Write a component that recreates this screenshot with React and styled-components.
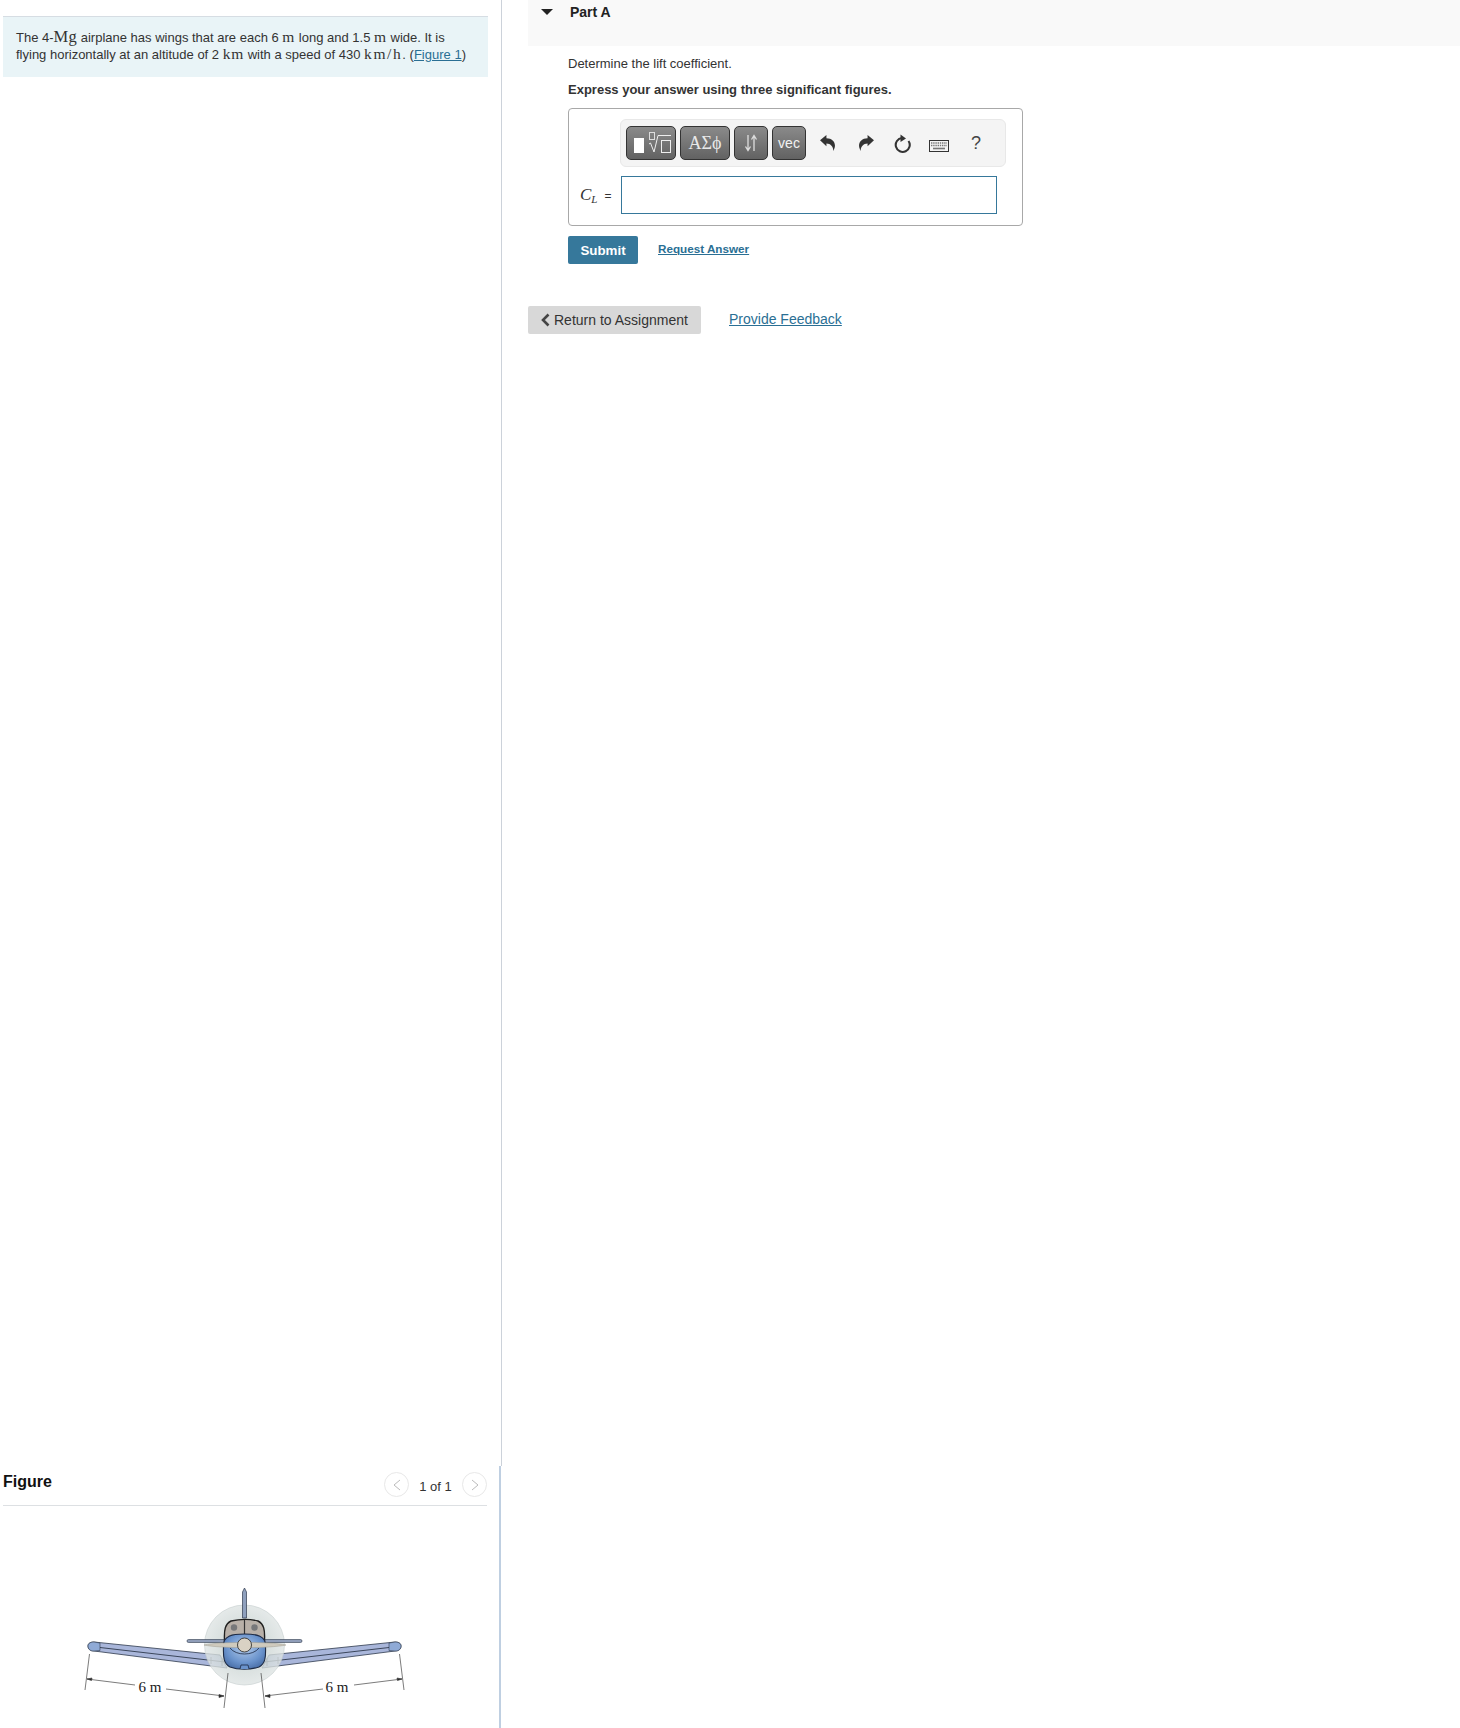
import React from 'react'
import styled, { createGlobalStyle } from 'styled-components'

const Global = createGlobalStyle`
    html, body {
        margin: 0;
        padding: 0;
        background: #fff;
    }
    body {
        font-family: "Liberation Sans", Arial, sans-serif;
        color: #333;
    }
`

const Page = styled.div`
    display: flex;
    width: 1460px;
    height: 1728px;
    overflow: hidden;
`

const LeftColumn = styled.div`
    display: flex;
    flex-direction: column;
    width: 502px;
    flex-shrink: 0;
`

const ProblemPane = styled.div`
    height: 1466px;
    box-sizing: border-box;
    padding: 16px 0 0 3px;
    border-right: 1px solid #ccd2da;
`

const ProblemBox = styled.div`
    width: 485px;
    height: 61px;
    box-sizing: border-box;
    padding: 12px 13px 0;
    background: #e9f4f7;
    border-top: 1px solid #d6dde3;
    font-size: 13px;
    line-height: 17px;
    white-space: nowrap;
`

const MathText = styled.span`
    font-family: "Liberation Serif", "Times New Roman", serif;
    font-size: ${p => p.$size || 15.5}px;
    line-height: 0;
    letter-spacing: ${p => p.$spacing || 0.8}px;
`

const TextLink = styled.a`
    color: #2a6f94;
    text-decoration: underline;
`

const FigurePane = styled.div`
    flex: 1;
    width: 501px;
    box-sizing: border-box;
    padding-left: 3px;
    border-right: 2px solid #bfcfe1;
`

const FigureHeader = styled.div`
    display: flex;
    align-items: center;
    justify-content: space-between;
    width: 484px;
    height: 39px;
    border-bottom: 1px solid #dde0e3;
`

const FigureTitle = styled.h3`
    margin: 0 0 8px;
    font-size: 16px;
    font-weight: 700;
    color: #111;
`

const Pager = styled.div`
    display: flex;
    align-items: center;
    margin-top: 2px;
    font-size: 13px;
    color: #333;
`

const PagerButton = styled.span`
    display: flex;
    align-items: center;
    justify-content: center;
    width: 25px;
    height: 25px;
    box-sizing: border-box;
    border: 1px solid #e8e8e8;
    border-radius: 50%;
    margin-top: -4px;
`

const PagerLabel = styled.span`
    width: 53px;
    text-align: center;
`

const FigureArt = styled.svg`
    display: block;
    margin: 64px 0 0 67px;
`

const RightColumn = styled.div`
    flex: 1;
    padding-left: 26px;
`

const PartHeader = styled.div`
    display: flex;
    align-items: flex-start;
    height: 46px;
    background: #f9f9f9;
`

const Caret = styled.span`
    width: 0;
    height: 0;
    margin: 9px 0 0 13px;
    border-left: 6px solid transparent;
    border-right: 6px solid transparent;
    border-top: 6px solid #222;
`

const PartTitle = styled.h2`
    margin: 4px 0 0 17px;
    font-size: 14px;
    line-height: 16px;
    font-weight: 700;
    color: #222;
`

const PartBody = styled.div`
    padding-left: 40px;
`

const Prompt = styled.p`
    margin: 10px 0 0;
    font-size: 13px;
    line-height: 16px;
`

const Hint = styled.p`
    margin: 10px 0 0;
    font-size: 13px;
    line-height: 16px;
    font-weight: 700;
    color: #333;
`

const AnswerBox = styled.div`
    width: 455px;
    height: 118px;
    box-sizing: border-box;
    margin-top: 10px;
    padding: 10px 16px 0 51px;
    border: 1px solid #a8a8a8;
    border-radius: 4px;
`

const Toolbar = styled.div`
    display: flex;
    align-items: center;
    width: 386px;
    height: 48px;
    box-sizing: border-box;
    padding-left: 5px;
    background: #f4f4f4;
    border: 1px solid #e8e8e8;
    border-radius: 6px;
`

const ToolButton = styled.span`
    display: flex;
    align-items: center;
    justify-content: center;
    width: ${p => p.$w}px;
    height: 34px;
    box-sizing: border-box;
    margin-right: 4px;
    background: linear-gradient(#8a8a8a, #626262);
    border: 1px solid #333;
    border-radius: 5px;
    color: #f2f2f2;
    font-size: 14px;
`

const GreekLabel = styled.span`
    font-family: "Liberation Serif", serif;
    font-size: 18px;
    color: #e8e8e8;
`

const IconSlot = styled.span`
    display: flex;
    align-items: center;
    justify-content: center;
    width: ${p => p.$w}px;
    height: 34px;
    color: #444;
    font-size: 18px;
`

const AnswerRow = styled.div`
    display: flex;
    align-items: center;
    margin: 9px 0 0 -40px;
`

const SymbolLabel = styled.label`
    width: 41px;
    box-sizing: border-box;
    font-size: 12px;
    white-space: nowrap;
    color: #333;
`

const SymbolItalic = styled.i`
    font-family: "Liberation Serif", serif;
    font-size: 17px;
`

const SymbolSub = styled.sub`
    font-family: "Liberation Serif", serif;
    font-style: italic;
    font-size: 11px;
    line-height: 0;
    margin-right: 7px;
`

const AnswerInput = styled.input`
    display: block;
    width: 376px;
    height: 38px;
    box-sizing: border-box;
    border: 1px solid #36789b;
    background: #fff;
    outline: none;
`

const ActionRow = styled.div`
    display: flex;
    align-items: flex-start;
    margin-top: 10px;
`

const SubmitButton = styled.button`
    width: 70px;
    height: 28px;
    padding: 0;
    background: #36789b;
    border: none;
    border-radius: 2px;
    color: #fff;
    font-family: inherit;
    font-size: 13.33px;
    font-weight: 700;
`

const RequestLink = styled(TextLink)`
    margin: 6px 0 0 20px;
    font-size: 11.7px;
    line-height: 14px;
    font-weight: 700;
`

const FooterRow = styled.div`
    display: flex;
    align-items: flex-start;
    margin-top: 42px;
`

const ReturnButton = styled.button`
    display: flex;
    align-items: center;
    gap: 4px;
    width: 173px;
    height: 28px;
    padding: 0 0 0 13px;
    background: #d8d8d8;
    border: none;
    border-radius: 2px;
    color: #333;
    font-family: inherit;
    font-size: 14px;
    white-space: nowrap;
`

const FeedbackLink = styled(TextLink)`
    margin: 5px 0 0 28px;
    font-size: 14px;
    line-height: 16px;
`

const KeyboardSvg = styled.svg`
    margin-top: 5px;
`

const MirrorSvg = styled.svg`
    transform: ${p => (p.$flip ? 'scaleX(-1)' : 'none')};
`

const TemplateIcon = () => (
    <svg width="44" height="26" viewBox="0 0 44 26">
        <rect x="5" y="8" width="10" height="15" fill="#fff" />
        <rect x="20.5" y="2.5" width="5" height="7" fill="none" stroke="#ddd" strokeWidth="1" />
        <path d="M20 14 L21.5 13 L25 22 L29 5.5 H42" fill="none" stroke="#eee" strokeWidth="1" />
        <rect x="32.5" y="10.5" width="9" height="12" fill="none" stroke="#eee" strokeWidth="1" />
    </svg>
)

const ArrowsIcon = () => (
    <svg width="16" height="18" viewBox="0 0 16 18" fill="none" stroke="#ddd" strokeWidth="1.3">
        <path d="M5 1 V16 M2.5 12.5 L5 16.5 L7.5 12.5" />
        <path d="M11 17 V2 M8.5 5.5 L11 1.5 L13.5 5.5" />
    </svg>
)

const UndoIcon = ({ flip }) => (
    <MirrorSvg $flip={flip} width="15" height="16" viewBox="0 0 14 15">
        <path d="M0 5 L6 0 V3 C11 3 14 6 14 10 C14 12 13 13.5 12.5 15 C12.5 11 10 8 6 8 V10.5 Z" fill="#333" />
    </MirrorSvg>
)

const ResetIcon = () => (
    <svg width="18" height="21" viewBox="0 0 18 21">
        <path d="M15.5 8 A7 7 0 1 1 9 5" fill="none" stroke="#333" strokeWidth="2.1" />
        <path d="M7.5 1.5 L13 5.5 L7.5 9 Z" fill="#333" />
    </svg>
)

const KeyboardIcon = () => (
    <KeyboardSvg width="20" height="12" viewBox="0 0 20 12">
        <rect x="0.5" y="0.5" width="19" height="11" fill="#f4f4f4" stroke="#333" />
        <path d="M2 3 H18 M2 5.5 H18" stroke="#777" strokeWidth="1.4" strokeDasharray="1.4 .8" />
        <path d="M4 8.5 H16" stroke="#777" strokeWidth="1.6" />
    </KeyboardSvg>
)

const ChevronLight = ({ right }) => (
    <svg width="8" height="12" viewBox="0 0 8 12" fill="none" stroke="#bbb" strokeWidth="1">
        <path d={right ? 'M1 1 L7 6 L1 11' : 'M7 1 L1 6 L7 11'} />
    </svg>
)

const ChevronBold = () => (
    <svg width="9" height="14" viewBox="0 0 9 14" fill="none" stroke="#444" strokeWidth="2.6">
        <path d="M7.5 1.5 L2 7 L7.5 12.5" />
    </svg>
)

const Wing = ({ flip }) => (
    <g transform={flip ? 'translate(349 0) scale(-1 1)' : undefined}>
        <path d="M18 76 C18 73 21 72 24 72 L150 85 L157 98 L24 81 C20 81 18 79 18 76 Z" fill="#a9b6da" stroke="#2f3a4d" strokeWidth="0.8" />
        <path d="M18 76 C18 73 21 72 24 72 L30 73 L30 80.5 L24 81 C20 81 18 79 18 76 Z" fill="#8faad6" stroke="#2f3a4d" strokeWidth="0.6" />
        <path d="M30 77.5 L155 92" stroke="#2f3a4d" strokeWidth="0.9" />
        <path d="M141 87 V94 M152 88 V96" stroke="#2f3a4d" strokeWidth="0.8" />
    </g>
)

const Dimension = ({ flip }) => (
    <g transform={flip ? 'translate(349 0) scale(-1 1)' : undefined} stroke="#444" strokeWidth="0.7" fill="none">
        <path d="M19.5 84 L15 120" />
        <path d="M158 103 L154 138" />
        <path d="M17 109 L65 115 M96 119 L154 126" />
        <path d="M17 109 L22 108 L21.5 110.5 Z M154 126 L149 124.5 L149 127.5 Z" fill="#222" />
    </g>
)

const Airplane = () => (
    <FigureArt width="350" height="158" viewBox="0 0 350 158">
        <defs>
            <radialGradient id="disc" cx="0.5" cy="0.5" r="0.6">
                <stop offset="0" stopColor="#b9c7c4" />
                <stop offset="1" stopColor="#e6eaea" />
            </radialGradient>
            <radialGradient id="nose" cx="0.5" cy="0.4" r="0.7">
                <stop offset="0" stopColor="#b3cbea" />
                <stop offset="0.6" stopColor="#6a93cc" />
                <stop offset="1" stopColor="#3f639c" />
            </radialGradient>
        </defs>
        <Wing />
        <Wing flip />
        <circle cx="174.5" cy="75" r="40" fill="url(#disc)" fillOpacity="0.8" stroke="#c4cccc" strokeWidth="0.6" />
        <path d="M172.5 48 V22 L174.5 18 L176.5 22 V48 Z" fill="#8fa0bd" stroke="#2f3a4d" strokeWidth="0.7" />
        <rect x="117" y="69.5" width="115" height="3" rx="1.5" fill="#8f9db8" stroke="#2f3a4d" strokeWidth="0.6" />
        <path d="M154.5 70 C154 60 155 54 161 51 C170 49 180 49 188 51 C194 54 195 60 194.5 70 Z" fill="#b8b0a8" stroke="#1f1f1f" strokeWidth="1.4" />
        <path d="M174.5 50 V66" stroke="#333" strokeWidth="1.2" />
        <circle cx="164" cy="57.5" r="3.2" fill="#77787a" />
        <path d="M158 68 C158 63 170 63 170 68 Z" fill="#77787a" />
        <circle cx="184.5" cy="57.5" r="3.2" fill="#77787a" />
        <path d="M178.5 68 C178.5 63 190.5 63 190.5 68 Z" fill="#77787a" />
        <path d="M153.5 76 C153 66 162 64 174.5 64 C187 64 196 66 195.5 76 C196 88 195 94 189 97 C180 100 168 100 160 97 C154 94 153 88 153.5 76 Z" fill="url(#nose)" stroke="#1d2a44" strokeWidth="1.1" />
        <path d="M160 78 C166 86 183 86 189 78" fill="none" stroke="#1d2a44" strokeWidth="0.8" />
        <path d="M170 99 L171 95 H178 L179 99" fill="#6a93cc" stroke="#1d2a44" strokeWidth="0.8" />
        <path d="M134 75 C150 71.5 200 71.5 216 75 C200 78.5 150 78.5 134 75 Z" fill="#cfcabd" stroke="#a09c90" strokeWidth="0.5" />
        <circle cx="174.5" cy="75" r="7" fill="#d9d2c4" stroke="#333" strokeWidth="0.9" />
        <Dimension />
        <Dimension flip />
        <text x="80" y="122" fontFamily="Liberation Serif, serif" fontSize="15" textAnchor="middle" fill="#222">6 m</text>
        <text x="267" y="122" fontFamily="Liberation Serif, serif" fontSize="15" textAnchor="middle" fill="#222">6 m</text>
    </FigureArt>
)

const App = () => {
    return (
        <Page>
            <Global />
            <LeftColumn>
                <ProblemPane>
                    <ProblemBox>
                        The 4-<MathText $size={16.5} $spacing={0.3}>Mg</MathText> airplane has wings that are each 6 <MathText>m</MathText> long and 1.5 <MathText>m</MathText> wide. It is
                        <br />
                        flying horizontally at an altitude of 2 <MathText>km</MathText> with a speed of 430 <MathText $spacing={1.6}>km/h</MathText>. (<TextLink href="#figure">Figure 1</TextLink>)
                    </ProblemBox>
                </ProblemPane>
                <FigurePane>
                    <FigureHeader>
                        <FigureTitle>Figure</FigureTitle>
                        <Pager>
                            <PagerButton><ChevronLight /></PagerButton>
                            <PagerLabel>1 of 1</PagerLabel>
                            <PagerButton><ChevronLight right /></PagerButton>
                        </Pager>
                    </FigureHeader>
                    <Airplane />
                </FigurePane>
            </LeftColumn>
            <RightColumn>
                <PartHeader>
                    <Caret />
                    <PartTitle>Part A</PartTitle>
                </PartHeader>
                <PartBody>
                    <Prompt>Determine the lift coefficient.</Prompt>
                    <Hint>Express your answer using three significant figures.</Hint>
                    <AnswerBox>
                        <Toolbar>
                            <ToolButton $w={50}><TemplateIcon /></ToolButton>
                            <ToolButton $w={50}><GreekLabel>ΑΣϕ</GreekLabel></ToolButton>
                            <ToolButton $w={34}><ArrowsIcon /></ToolButton>
                            <ToolButton $w={34}>vec</ToolButton>
                            <IconSlot $w={34}><UndoIcon /></IconSlot>
                            <IconSlot $w={44}><UndoIcon flip /></IconSlot>
                            <IconSlot $w={28}><ResetIcon /></IconSlot>
                            <IconSlot $w={46}><KeyboardIcon /></IconSlot>
                            <IconSlot $w={28}>?</IconSlot>
                        </Toolbar>
                        <AnswerRow>
                            <SymbolLabel>
                                <SymbolItalic>C</SymbolItalic>
                                <SymbolSub>L</SymbolSub>=
                            </SymbolLabel>
                            <AnswerInput type="text" />
                        </AnswerRow>
                    </AnswerBox>
                    <ActionRow>
                        <SubmitButton>Submit</SubmitButton>
                        <RequestLink href="#answer">Request Answer</RequestLink>
                    </ActionRow>
                </PartBody>
                <FooterRow>
                    <ReturnButton><ChevronBold />Return to Assignment</ReturnButton>
                    <FeedbackLink href="#feedback">Provide Feedback</FeedbackLink>
                </FooterRow>
            </RightColumn>
        </Page>
    )
}

export default App
